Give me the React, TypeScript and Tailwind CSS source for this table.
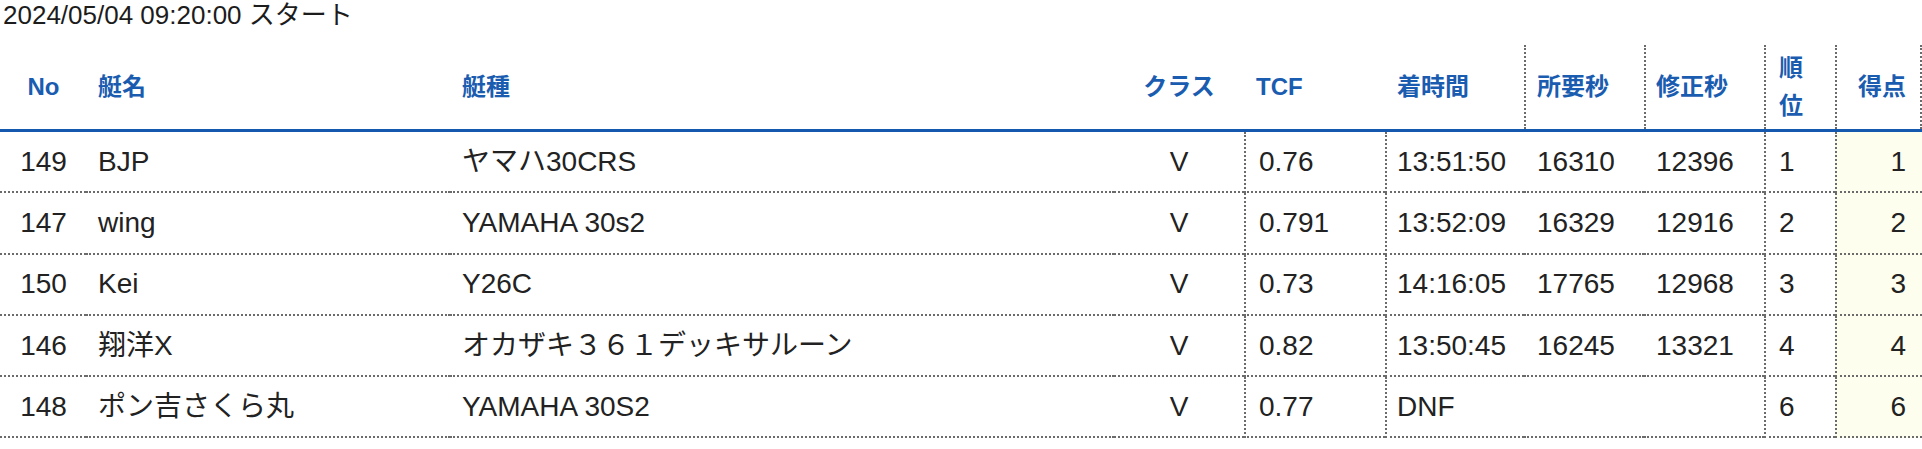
type Row = {
  no: number
  name: string
  model: string
  cls: string
  tcf: string
  finish: string
  elapsed: string
  corrected: string
  rank: string
  score: string
}

const rows: Row[] = [
  { no: 149, name: 'BJP', model: 'ヤマハ30CRS', cls: 'V', tcf: '0.76', finish: '13:51:50', elapsed: '16310', corrected: '12396', rank: '1', score: '1' },
  { no: 147, name: 'wing', model: 'YAMAHA 30s2', cls: 'V', tcf: '0.791', finish: '13:52:09', elapsed: '16329', corrected: '12916', rank: '2', score: '2' },
  { no: 150, name: 'Kei', model: 'Y26C', cls: 'V', tcf: '0.73', finish: '14:16:05', elapsed: '17765', corrected: '12968', rank: '3', score: '3' },
  { no: 146, name: '翔洋X', model: 'オカザキ３６１デッキサルーン', cls: 'V', tcf: '0.82', finish: '13:50:45', elapsed: '16245', corrected: '13321', rank: '4', score: '4' },
  { no: 148, name: 'ポン吉さくら丸', model: 'YAMAHA 30S2', cls: 'V', tcf: '0.77', finish: 'DNF', elapsed: '', corrected: '', rank: '6', score: '6' },
]

const th = 'h-[84px] px-0 align-middle font-bold leading-[38px] text-[#1a5cb0]'
const dotL = 'border-l-2 border-dotted border-l-[#6b6b6b]'
const td = 'h-[61.3px] border-b-2 border-dotted border-b-[#6b6b6b] p-0 align-middle leading-[40px]'

export default function App() {
  return (
    <div
      className="w-[1922px] bg-white text-[#222]"
      style={{ fontFamily: '"Liberation Sans", "Noto Sans CJK JP", sans-serif' }}
    >
      {/* スタート時刻 */}
      <div className="mb-[15px] h-[30px] pl-[3px] text-[26px] leading-[30px] text-[#1c1c1c]">2024/05/04 09:20:00 スタート</div>

      <table className="w-[1922px] table-fixed border-separate border-spacing-0 text-[28px]">
        <colgroup>
          <col className="w-[86px]" />
          <col className="w-[364px]" />
          <col className="w-[664px]" />
          <col className="w-[130px]" />
          <col className="w-[141px]" />
          <col className="w-[139px]" />
          <col className="w-[120px]" />
          <col className="w-[120px]" />
          <col className="w-[71px]" />
          <col className="w-[87px]" />
        </colgroup>
        <thead className="text-[24px]">
          <tr>
            <th className={`${th} pl-[1px] text-center`}>No</th>
            <th className={`${th} pl-[12px] text-left`}>艇名</th>
            <th className={`${th} pl-[12px] text-left`}>艇種</th>
            <th className={`${th} text-center`}>クラス</th>
            <th className={`${th} pl-[12px] text-left`}>TCF</th>
            <th className={`${th} pl-[12px] text-left`}>着時間</th>
            <th className={`${th} ${dotL} pl-[11px] text-left`}>所要秒</th>
            <th className={`${th} ${dotL} pl-[10px] text-left`}>修正秒</th>
            <th className={`${th} ${dotL} pl-[13px] text-left`}>
              順<br />位
            </th>
            <th className={`${th} ${dotL} border-r-2 border-r-[#6b6b6b] pr-[14px] text-right`}>得点</th>
          </tr>
          {/* ヘッダー下の青線 */}
          <tr>
            <td colSpan={10} className="h-[3px] bg-[#1459ae] p-0" />
          </tr>
        </thead>
        <tbody>
          {rows.map(r => (
            <tr key={r.no}>
              <td className={`${td} pl-[1px] text-center`}>{r.no}</td>
              <td className={`${td} pl-[12px]`}>{r.name}</td>
              <td className={`${td} pl-[12px]`}>{r.model}</td>
              <td className={`${td} text-center`}>{r.cls}</td>
              <td className={`${td} ${dotL} pl-[13px]`}>{r.tcf}</td>
              <td className={`${td} ${dotL} pl-[10px]`}>{r.finish}</td>
              <td className={`${td} pl-[13px]`}>{r.elapsed}</td>
              <td className={`${td} pl-[12px]`}>{r.corrected}</td>
              <td className={`${td} ${dotL} pl-[13px]`}>{r.rank}</td>
              <td className={`${td} ${dotL} bg-[#fefeee] pr-[16px] text-right`}>{r.score}</td>
            </tr>
          ))}
        </tbody>
      </table>
    </div>
  )
}
